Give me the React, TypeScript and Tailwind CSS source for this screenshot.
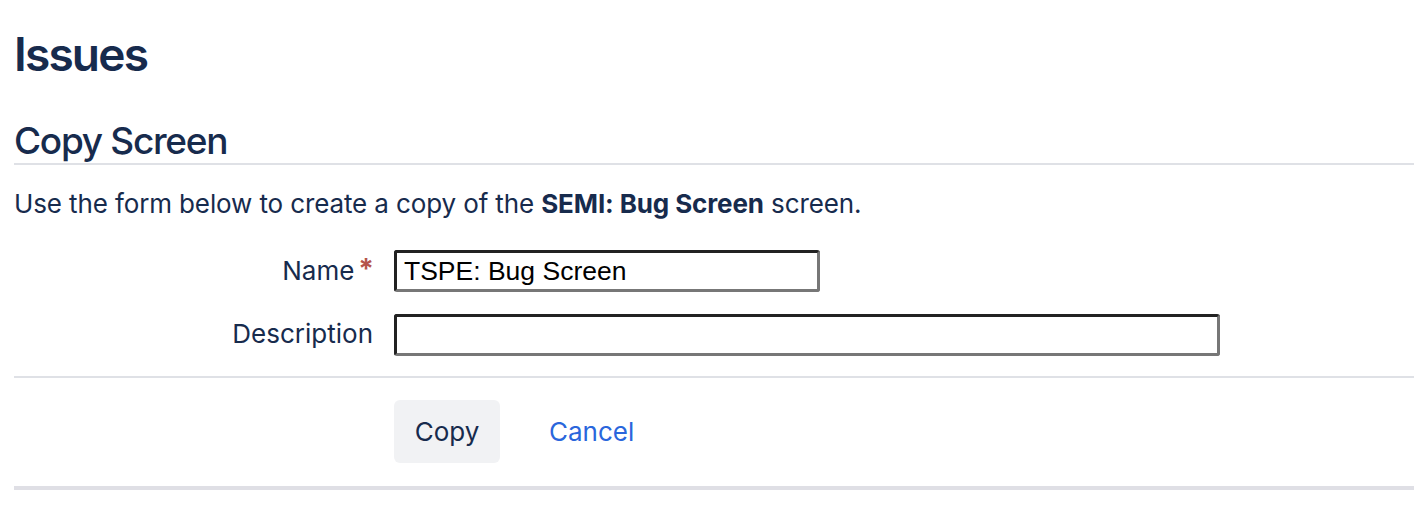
import { useState } from 'react'

const textFont = { fontFamily: 'Inter, "Noto Sans", sans-serif' }

export default function App() {
  const [name, setName] = useState('TSPE: Bug Screen')
  const [description, setDescription] = useState('')

  return (
    <div className="bg-white pl-[14px] pt-[30px] text-[#172b4d]" style={textFont}>
      <h1 className="text-[46px] leading-[48px] font-semibold tracking-[-1.8px]">Issues</h1>

      <h2 className="mt-[43px] pb-[3px] border-b-2 border-[#dfe1e6] text-[37px] leading-[39px] font-medium tracking-[-1.3px]">
        Copy Screen
      </h2>

      <p className="mt-[26px] text-[26px] leading-[26px] tracking-[-0.12px]">
        Use the form below to create a copy of the <strong className="font-bold">SEMI: Bug Screen</strong> screen.
      </p>

      <form className="mt-[33px]" onSubmit={(e) => e.preventDefault()}>
        <div className="flex flex-col gap-[22px]">
          <div className="flex items-center">
            <label className="flex w-[360px] items-start justify-end text-[26px] leading-[26px]">
              Name
              <span className="ml-[4px] -mt-[3px] text-[28px] leading-[28px] font-bold text-[#b5544a]">*</span>
            </label>
            <input
              value={name}
              onChange={(e) => setName(e.target.value)}
              className="ml-[20px] h-[42px] w-[426px] rounded-[3px] border-[3px] border-t-[#222] border-l-[#222] border-b-[#777] border-r-[#777] px-[7px] text-[26.5px] text-black outline-none"
              style={{ fontFamily: '"Liberation Sans", Arial, sans-serif' }}
            />
          </div>
          <div className="flex items-center">
            <label className="w-[360px] pr-[1px] pb-[3px] text-right text-[26px] leading-[26px]">Description</label>
            <input
              value={description}
              onChange={(e) => setDescription(e.target.value)}
              className="ml-[20px] h-[42px] w-[826px] rounded-[3px] border-[3px] border-t-[#222] border-l-[#222] border-b-[#777] border-r-[#777] px-[7px] text-[26.5px] text-black outline-none"
              style={{ fontFamily: '"Liberation Sans", Arial, sans-serif' }}
            />
          </div>
        </div>

        <div className="mt-[20px] border-t-2 border-[#dfe1e6] pt-[22px] pb-[23px] border-b-4 border-b-[#dfdfe5]">
          <div className="ml-[380px] flex items-center gap-[49px]">
            <button className="h-[63px] w-[106px] rounded-[6px] bg-[#f1f2f4] text-[26px] text-[#172b4d]">Copy</button>
            <a href="#" className="text-[26px] text-[#2a66dc]">Cancel</a>
          </div>
        </div>
      </form>
    </div>
  )
}
